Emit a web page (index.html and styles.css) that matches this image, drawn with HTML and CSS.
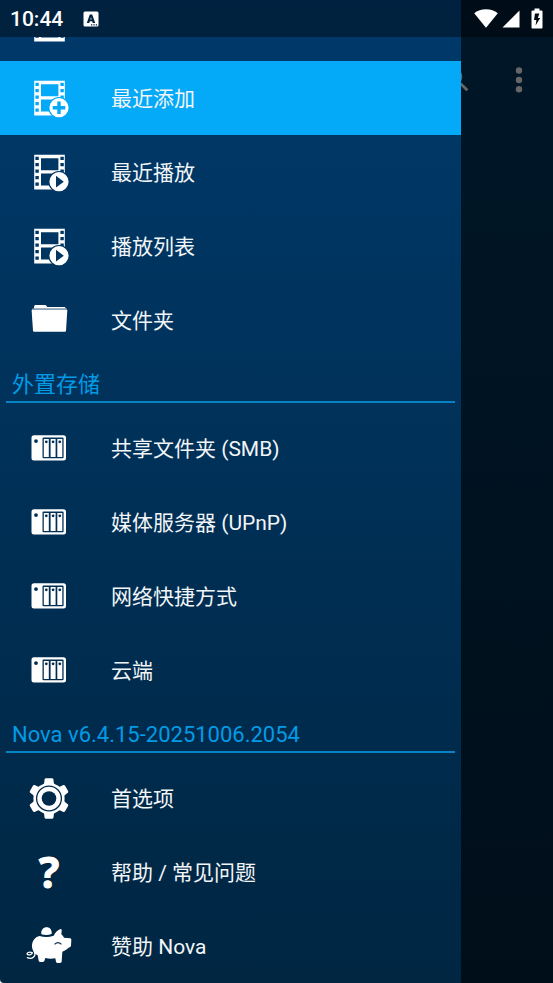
FILE: index.html
```html
<!DOCTYPE html>
<html lang="zh-CN">
<head>
<meta charset="utf-8">
<meta name="viewport" content="width=device-width, initial-scale=1">
<title>Nova</title>
<link rel="stylesheet" href="styles.css">
</head>
<body>
<svg class="defs" aria-hidden="true">
  <defs>
    <mask id="badge-gap" maskUnits="userSpaceOnUse" x="0" y="0" width="48" height="48">
      <rect width="48" height="48" fill="#fff"/>
      <circle cx="34" cy="33.7" r="10.7" fill="#000"/>
    </mask>
    <mask id="gear-cut" maskUnits="userSpaceOnUse" x="0" y="0" width="48" height="48">
      <rect width="48" height="48" fill="#fff"/>
      <circle cx="24" cy="24.5" r="12.4" fill="none" stroke="#000" stroke-width="1.3"/>
      <circle cx="24" cy="24.5" r="7.3" fill="#000"/>
    </mask>
    <symbol id="film" viewBox="0 0 48 48">
      <path fill-rule="evenodd" d="M9.2 6.7H39.8V41.4H9.2ZM16 10.2V22.2H33.4V10.2ZM16 25.6V37.6H33.4V25.6ZM10.4 8.800h3.400v3.200h-3.400ZM10.400 15.100h3.400v3.200h-3.400ZM10.400 21.500h3.400v3.200h-3.400ZM10.400 28h3.400v3.200h-3.400ZM10.400 34.600h3.400v3.200h-3.400ZM35.400 8.800h3.400v3.200h-3.400ZM35.400 15.100h3.400v3.200h-3.400ZM35.400 21.500h3.400v3.200h-3.400ZM35.400 28h3.400v3.200h-3.400ZM35.400 34.600h3.400v3.200h-3.400Z"/>
    </symbol>
    <symbol id="film-add" viewBox="0 0 48 48">
      <g mask="url(#badge-gap)"><use href="#film" width="48" height="48"/></g>
      <path fill-rule="evenodd" d="M34 24.1a9.6 9.6 0 1 1 0 19.2a9.6 9.6 0 1 1 0-19.2ZM32.3 27.4v4.6h-4.6v3.4h4.6V40h3.4v-4.6h4.6V32h-4.6v-4.6Z"/>
    </symbol>
    <symbol id="film-play" viewBox="0 0 48 48">
      <g mask="url(#badge-gap)"><use href="#film" width="48" height="48"/></g>
      <path fill-rule="evenodd" d="M34 24.1a9.6 9.6 0 1 1 0 19.2a9.6 9.6 0 1 1 0-19.2ZM31 27.8V39.6L38.8 33.7Z"/>
    </symbol>
    <symbol id="folder" viewBox="0 0 48 48">
      <path d="M9 12.4V10.4L10 9H20.6L22.4 11H39.8L41 12.4Z"/>
      <path opacity=".55" d="M7 12.6H42V14.2H7Z"/>
      <path d="M6.6 14H42.3L41 34.8Q40.9 35.7 40 35.7H9Q8.1 35.7 8 34.8Z"/>
    </symbol>
    <symbol id="nas" viewBox="0 0 48 48">
      <path fill-rule="evenodd" d="M9 11.2H38.5a2.5 2.5 0 0 1 2.5 2.5V34a2.5 2.5 0 0 1-2.5 2.5H9A2.5 2.5 0 0 1 6.5 34V13.7A2.5 2.5 0 0 1 9 11.2ZM18.5 13.4a1 1 0 0 0-1 1V33.2a1 1 0 0 0 1 1H37.6a1 1 0 0 0 1-1V14.4a1 1 0 0 0-1-1ZM11 15.2a1.9 1.9 0 1 0 0 3.8a1.9 1.9 0 1 0 0-3.8Z"/>
      <path fill-rule="evenodd" d="M18.8 15H23.8V33H18.8ZM21.3 16.4a1.4 1.4 0 1 0 0 2.8a1.4 1.4 0 1 0 0-2.8ZM25.6 15H30.6V33H25.6ZM28.1 16.4a1.4 1.4 0 1 0 0 2.8a1.4 1.4 0 1 0 0-2.8ZM32.3 15H37.3V33H32.3ZM34.8 16.4a1.4 1.4 0 1 0 0 2.8a1.4 1.4 0 1 0 0-2.8Z"/>
    </symbol>
    <symbol id="gear" viewBox="0 0 48 48">
      <g mask="url(#gear-cut)">
        <circle cx="24" cy="24.5" r="15.6"/>
        <path id="tooth" d="M17.5 11.5L19.1 9.3L19.6 5.3Q19.8 4.2 21 4.2H27Q28.2 4.2 28.4 5.3L28.9 9.3L30.5 11.5Z"/>
        <use href="#tooth" transform="rotate(60 24 24.5)"/>
        <use href="#tooth" transform="rotate(120 24 24.5)"/>
        <use href="#tooth" transform="rotate(180 24 24.5)"/>
        <use href="#tooth" transform="rotate(240 24 24.5)"/>
        <use href="#tooth" transform="rotate(300 24 24.5)"/>
      </g>
    </symbol>
    <symbol id="pig" viewBox="15 6 144 144">
      <path d="M64 43C62 30 70 22 80 22C90 22 96 30 95 42Q80 47 64 43Z"/>
      <path d="M59 48Q80 54 101 47C105 38 113 29 122 27Q126 27 125 33L124 43Q129 47 132 53L151 55Q154 56 154 60L153 77Q152 81 146 83Q138 91 127 95L125 125Q124 129 118 129H113Q109 129 108 125L106 115Q91 118 76 114L73 123Q72 126 67 126H61Q57 126 56 122L53 106Q37 97 36 80C35 64 44 51 59 48Z"/>
      <path d="M105 72Q114 64 123 72" fill="none" stroke="#002847" stroke-width="3.5" stroke-linecap="round"/>
      <path d="M36 98C28 94 19 99 22 103C26 107 38 103 37 98M44 97C48 108 37 120 22 113" fill="none" stroke="#fff" stroke-width="4" stroke-linecap="round"/>
    </symbol>
  </defs>
</svg>

<div class="screen">
  <header class="status">
    <time class="clock">10:44</time>
    <svg class="status-app" viewBox="0 0 16 16" aria-hidden="true">
      <path fill-rule="evenodd" d="M2 .5H14Q15.5 .5 15.5 2V14Q15.5 15.5 14 15.5H2Q.5 15.5 .5 14V2Q.5 .5 2 .5ZM6.8 3.5L3.8 12H6.2L6.8 10.2H9.2L9.8 12H12.2L9.2 3.5ZM8 6.2L8.7 8.5H7.3ZM8 13.2v1.3h1.3V13.2ZM10.4 13.2v1.3h1.3V13.2ZM12.8 13.2v1.3h1.3V13.2Z"/>
    </svg>
    <svg class="wifi" viewBox="0 0 24 19" aria-hidden="true"><path d="M12 18.7L.2 4.3Q5 .3 12 .3T23.8 4.3Z"/></svg>
    <svg class="signal" viewBox="0 0 18 18" aria-hidden="true"><path d="M17.5 .5V17.5H.5Z"/></svg>
    <svg class="battery" viewBox="0 0 12 21" aria-hidden="true"><path fill-rule="evenodd" d="M3.5 .5H8.5V2.5H10.5Q11.5 2.5 11.5 3.5V19.5Q11.5 20.5 10.5 20.5H1.5Q.5 20.5 .5 19.5V3.5Q.5 2.5 1.5 2.5H3.5ZM4 5.5L3 12H5.4L4.6 17.6L9.2 10H6.8L8.4 5.5Z"/></svg>
  </header>

  <nav class="drawer" aria-label="Nova">
    <div class="row row-cut"><svg class="icon" aria-hidden="true"><use href="#film"/></svg></div>
    <a class="row active" href="#added" aria-current="page"><svg class="icon" aria-hidden="true"><use href="#film-add"/></svg><span class="label">最近添加</span></a>
    <a class="row" href="#played"><svg class="icon" aria-hidden="true"><use href="#film-play"/></svg><span class="label">最近播放</span></a>
    <a class="row" href="#playlists"><svg class="icon" aria-hidden="true"><use href="#film-play"/></svg><span class="label">播放列表</span></a>
    <a class="row" href="#folders"><svg class="icon" aria-hidden="true"><use href="#folder"/></svg><span class="label">文件夹</span></a>

    <h2 class="section">外置存储</h2>
    <a class="row" href="#smb"><svg class="icon" aria-hidden="true"><use href="#nas"/></svg><span class="label">共享文件夹 (SMB)</span></a>
    <a class="row" href="#upnp"><svg class="icon" aria-hidden="true"><use href="#nas"/></svg><span class="label">媒体服务器 (UPnP)</span></a>
    <a class="row" href="#network"><svg class="icon" aria-hidden="true"><use href="#nas"/></svg><span class="label">网络快捷方式</span></a>
    <a class="row" href="#cloud"><svg class="icon" aria-hidden="true"><use href="#nas"/></svg><span class="label">云端</span></a>

    <h2 class="section">Nova v6.4.15-20251006.2054</h2>
    <a class="row" href="#preferences"><svg class="icon" aria-hidden="true"><use href="#gear"/></svg><span class="label">首选项</span></a>
    <a class="row" href="#help"><span class="icon question" aria-hidden="true">?</span><span class="label">帮助 / 常见问题</span></a>
    <a class="row" href="#sponsor"><svg class="icon" aria-hidden="true"><use href="#pig"/></svg><span class="label">赞助 Nova</span></a>
  </nav>

  <main class="content">
    <div class="toolbar">
      <button class="tool" type="button" aria-label="搜索">
        <svg viewBox="0 0 24 24" aria-hidden="true"><path d="M15.5 14h-.79l-.28-.27A6.471 6.471 0 0 0 16 9.5 6.5 6.5 0 1 0 9.5 16c1.61 0 3.09-.59 4.23-1.57l.27.28v.79l5 4.99L20.49 19l-4.99-5zm-6 0C7.01 14 5 11.99 5 9.5S7.01 5 9.5 5 14 7.01 14 9.5 11.99 14 9.5 14z"/></svg>
      </button>
      <button class="tool" type="button" aria-label="更多选项">
        <svg viewBox="0 0 32 32" aria-hidden="true"><circle cx="16" cy="6.5" r="3.2"/><circle cx="16" cy="16" r="3.2"/><circle cx="16" cy="25.3" r="3.2"/></svg>
      </button>
    </div>
  </main>
</div>
</body>
</html>
```
FILE: styles.css
```css
* {
  box-sizing: border-box;
}

body {
  margin: 0;
  background: #fff;
  color: #f2f5f8;
  font-family: Roboto, "Noto Sans CJK SC", sans-serif;
  font-size: 21px;
  line-height: 28px;
}

.defs {
  position: absolute;
  width: 0;
  height: 0;
}

.screen {
  display: grid;
  grid-template-columns: 5fr 1fr;
  grid-template-rows: 37px 1fr;
  min-height: 100vh;
  border-bottom-left-radius: 4px;
  overflow: hidden;
}

.status {
  grid-area: 1 / 1 / 2 / 3;
  z-index: 1;
  display: flex;
  align-items: center;
  padding: 0 10px;
  background: rgba(0, 0, 0, 0.4);
  color: #fff;
}

.status svg {
  fill: #fff;
}

.clock {
  font-weight: 500;
}

.status-app {
  width: 16px;
  height: 16px;
  margin-left: 20px;
}

.wifi {
  width: 24px;
  height: 19px;
  margin-left: auto;
}

.signal {
  width: 18px;
  height: 18px;
  margin-left: 4px;
}

.battery {
  width: 12px;
  height: 21px;
  margin-left: 11px;
}

.drawer {
  grid-area: 1 / 1 / 3 / 2;
  padding-top: 37px;
  background: linear-gradient(#003a6b, #002642);
}

.row {
  display: flex;
  align-items: center;
  height: 74px;
  padding-left: 25px;
  gap: 38px;
  color: inherit;
  text-decoration: none;
}

.row-cut {
  height: 24px;
  align-items: flex-end;
  padding-bottom: 13px;
  overflow: hidden;
}

.label {
  padding-top: 2px;
}

.active {
  background: #04a9f8;
}

.icon {
  flex: none;
  width: 48px;
  height: 48px;
  fill: #fff;
}

.question {
  color: #fff;
  font-family: "Noto Sans", sans-serif;
  font-size: 43px;
  font-weight: 700;
  line-height: 48px;
  text-align: center;
  text-shadow: 0 0 2px #000;
  -webkit-text-stroke: 1px #fff;
}

.section {
  height: 46px;
  margin: 0 6px 8px;
  padding: 14px 6px 0;
  border-bottom: 2px solid #0782c3;
  color: #039be5;
  font-size: 22px;
  font-weight: 400;
}

.content {
  grid-area: 1 / 2 / 3 / 3;
  padding-top: 37px;
  overflow: hidden;
  background: linear-gradient(#001728, #000e19);
}

.toolbar {
  display: flex;
  justify-content: flex-end;
  align-items: center;
  gap: 14px;
  height: 86px;
  padding-right: 10px;
}

.tool {
  flex: none;
  display: grid;
  place-items: center;
  width: 48px;
  height: 48px;
  padding: 0;
  border: 0;
  background: none;
}

.tool svg {
  width: 32px;
  height: 32px;
  fill: #666;
}
```
